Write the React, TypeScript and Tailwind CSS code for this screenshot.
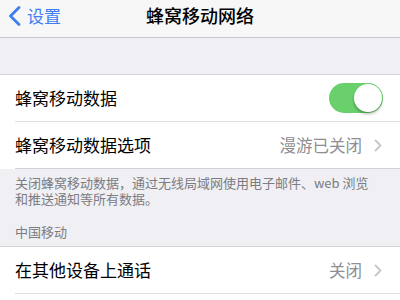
import React from 'react';

const font = { fontFamily: '"Noto Sans CJK SC", "Noto Sans", sans-serif' };

const Chevron = () => (
  <svg width="8" height="13" viewBox="0 0 8 13" className="ml-3 shrink-0">
    <polyline points="1.5,1.5 6.5,6.5 1.5,11.5" fill="none" stroke="#c7c7cc" strokeWidth="1.8" strokeLinecap="round" strokeLinejoin="round" />
  </svg>
);

const Row: React.FC<{ label: string; value?: string; toggle?: boolean; last?: boolean }> = ({ label, value, toggle, last }) => (
  <div className="pl-[15px] bg-white">
    <div className={`h-[47px] flex items-center pr-[18px] ${last ? 'border-b border-[#d4d4d8]' : 'border-b border-[#e0e0e4]'}`}>
      <span className="flex-1 text-[17px] text-black">{label}</span>
      {toggle && (
        <div className="w-[54px] h-[30px] rounded-full bg-[#6ad06c] flex items-center justify-end pr-[1px] mr-[-1px]">
          <div className="w-[28px] h-[28px] rounded-full bg-white shadow-[0_2px_3px_rgba(0,0,0,0.3)]" />
        </div>
      )}
      {value && (
        <>
          <span className="text-[16.5px] text-[#8e8e93]">{value}</span>
          <Chevron />
        </>
      )}
    </div>
  </div>
);

export default function App() {
  return (
    <div className="w-[400px] h-[300px] overflow-hidden bg-[#efeff4]" style={font}>
      <div className="h-[38px] bg-[#f7f7f8] border-b border-[#c8c7cc] flex items-center relative pb-[6px]">
        <div className="flex items-center pl-[8px] text-[#3e7ef0]">
          <svg width="13" height="20" viewBox="0 0 13 20">
            <polyline points="11,1.5 2.5,10 11,18.5" fill="none" stroke="#3e7ef0" strokeWidth="2.8" strokeLinecap="round" strokeLinejoin="round" />
          </svg>
          <span className="ml-[6px] text-[17px]">设置</span>
        </div>
        <div className="absolute left-0 right-0 top-0 h-[31px] flex items-center justify-center text-[18px] text-black font-medium pointer-events-none">
          蜂窝移动网络
        </div>
      </div>
      <div className="h-[37px] border-b border-[#d4d4d8]" />
      <Row label="蜂窝移动数据" toggle />
      <Row label="蜂窝移动数据选项" value="漫游已关闭" last />
      <div className="px-[15px] pt-[6px] text-[13px] leading-[16px] text-[#7c7c82]">
        <p>关闭蜂窝移动数据，通过无线局域网使用电子邮件、web 浏览</p>
        <p>和推送通知等所有数据。</p>
        <p className="mt-[17px] pb-[6px]">中国移动</p>
      </div>
      <div className="border-t border-[#d4d4d8]">
        <Row label="在其他设备上通话" value="关闭" />
      </div>
      <div className="h-[20px] bg-white" />
    </div>
  );
}
